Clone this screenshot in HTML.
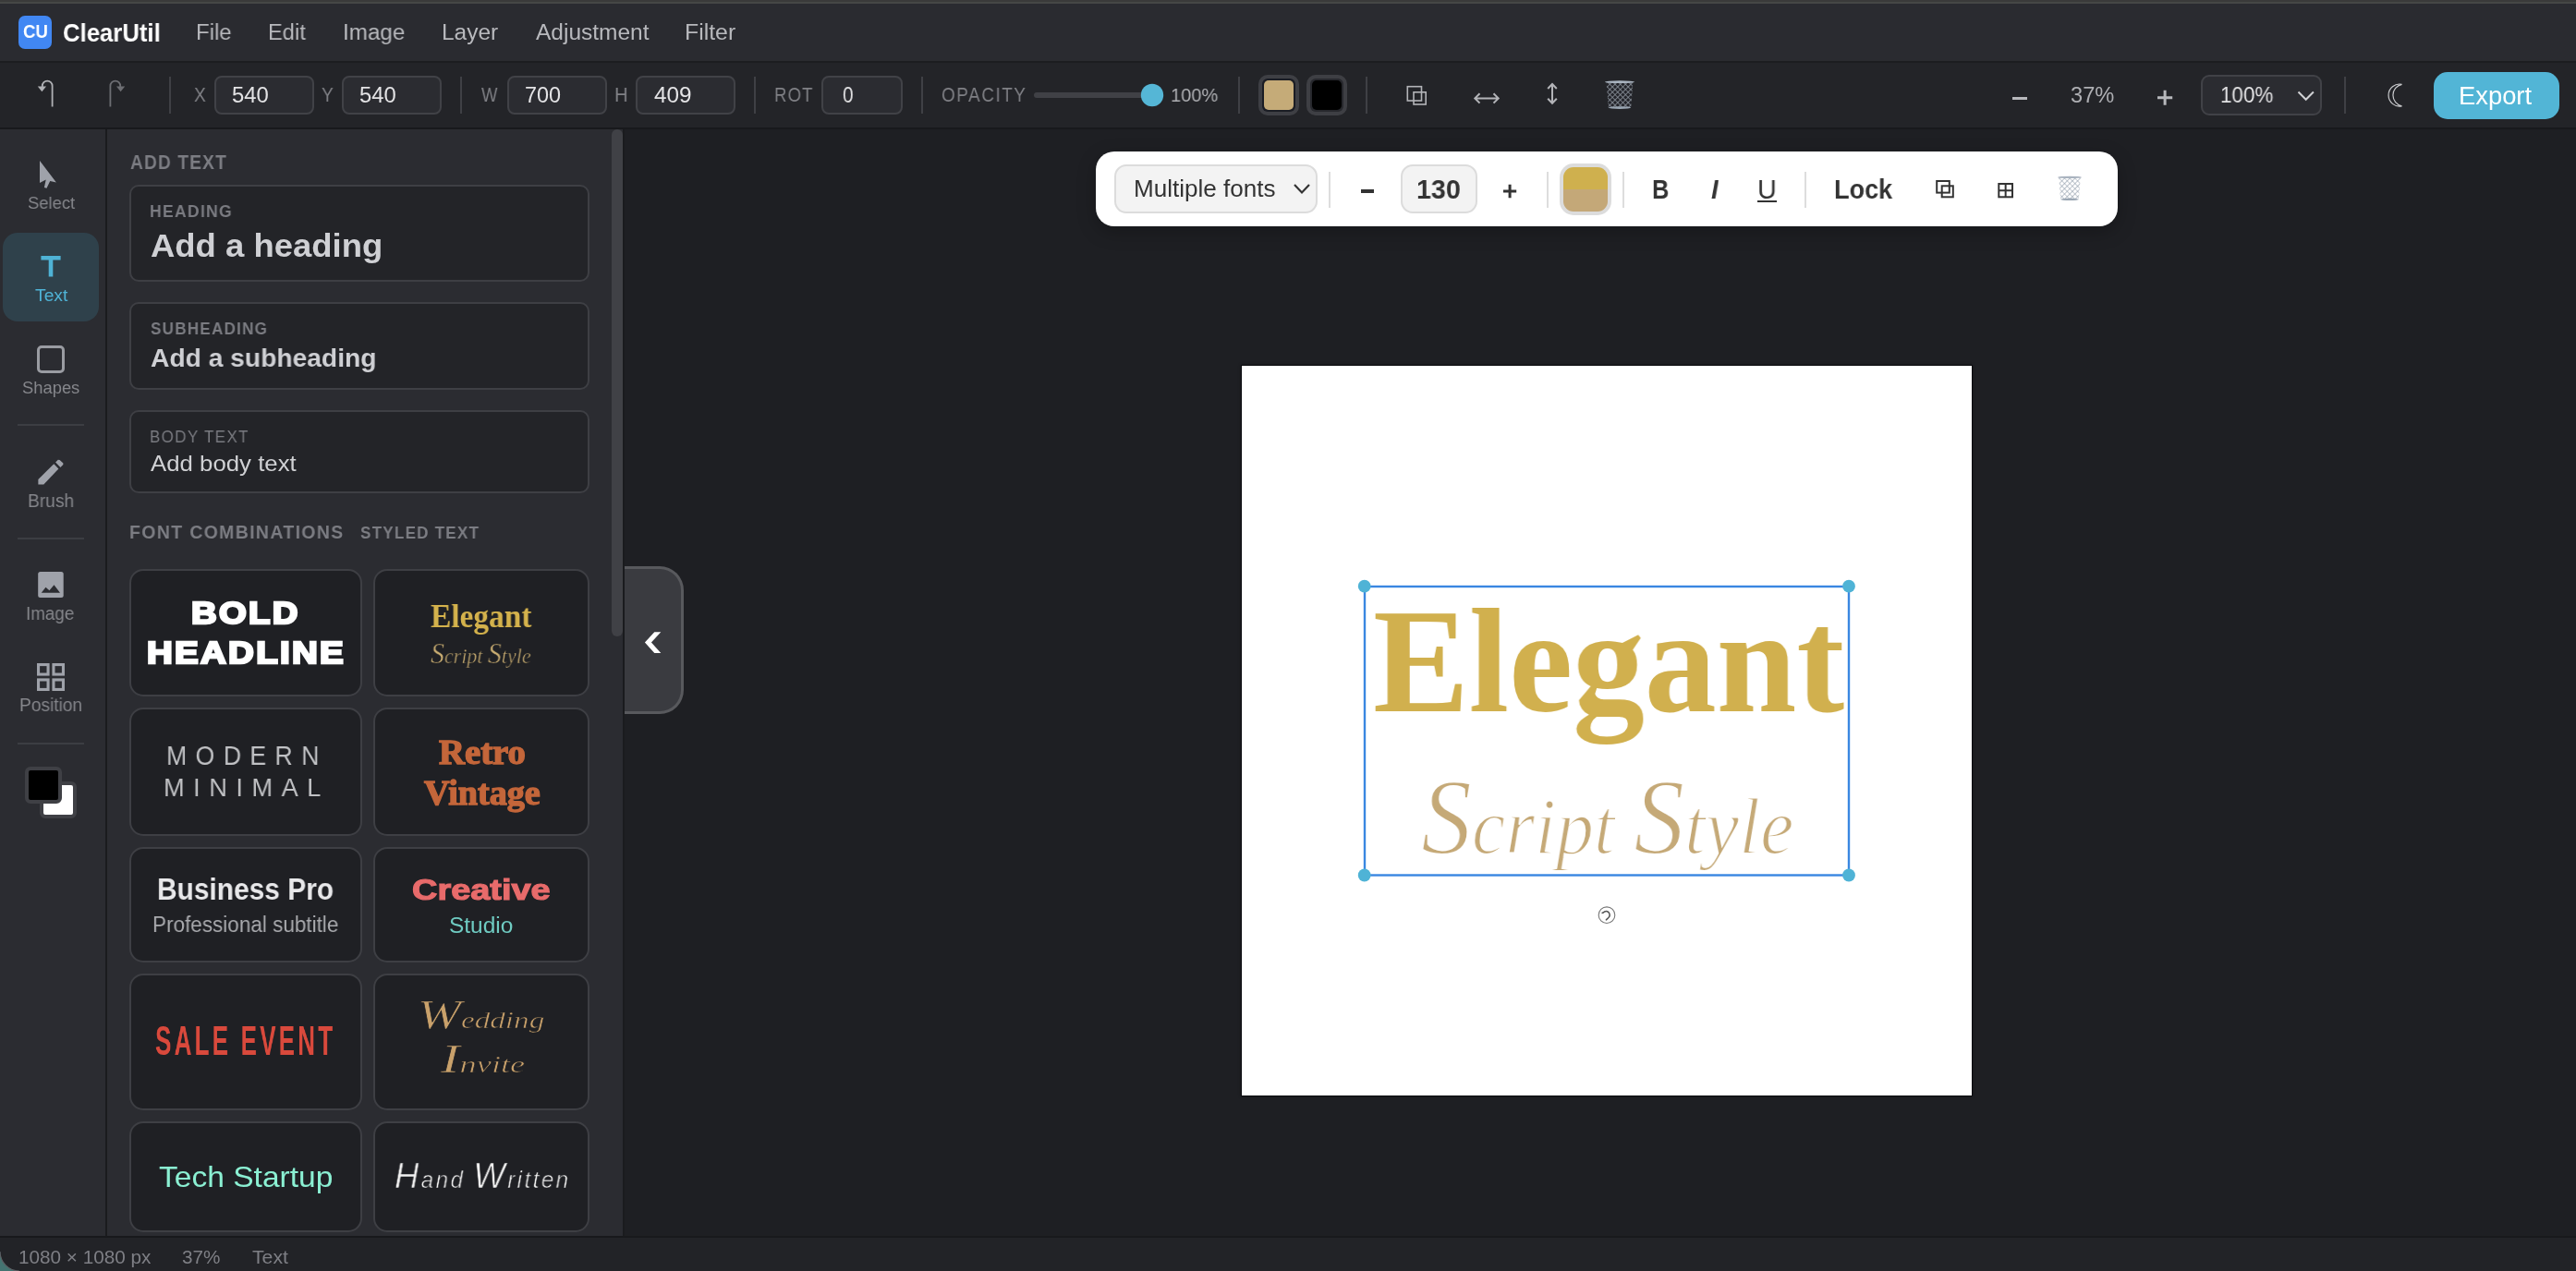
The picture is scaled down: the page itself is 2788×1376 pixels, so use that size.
<!DOCTYPE html>
<html><head><meta charset="utf-8"><title>ClearUtil</title>
<style>
html,body{margin:0;padding:0;width:2788px;height:1376px;overflow:hidden;background:#1e1f23;}
.b{position:absolute;box-sizing:border-box;}
.t{position:absolute;white-space:nowrap;transform-origin:0 0;line-height:normal;will-change:transform;}
svg.o{position:absolute;left:0;top:0;}
</style></head><body>
<div class="b" style="left:0px;top:0px;width:2788px;height:4px;background:#464746;"></div><div class="b" style="left:0px;top:0px;width:2788px;height:1.5px;background:#3a3a3a;"></div><div class="b" style="left:0px;top:4px;width:2788px;height:62px;background:#2a2b30;"></div><div class="b" style="left:0px;top:66px;width:2788px;height:2px;background:#1c1d20;"></div><div class="b" style="left:0px;top:68px;width:2788px;height:70px;background:#232428;"></div><div class="b" style="left:0px;top:138px;width:2788px;height:2px;background:#18191c;"></div><div class="b" style="left:0px;top:140px;width:114px;height:1198px;background:#2b2c31;"></div><div class="b" style="left:114px;top:140px;width:2px;height:1198px;background:#1a1b1e;"></div><div class="b" style="left:116px;top:140px;width:558px;height:1198px;background:#2b2c31;"></div><div class="b" style="left:674px;top:140px;width:2px;height:1198px;background:#1a1b1e;"></div><div class="b" style="left:0px;top:1338px;width:2788px;height:2px;background:#18191c;"></div><div class="b" style="left:0px;top:1340px;width:2788px;height:36px;background:#222327;"></div><div class="b" style="left:20px;top:17px;width:36px;height:36px;background:#4187f3;border-radius:7px;"></div><div class="b" style="left:183px;top:83px;width:2px;height:40px;background:#3f4045;"></div><div class="b" style="left:498px;top:83px;width:2px;height:40px;background:#3f4045;"></div><div class="b" style="left:816px;top:83px;width:2px;height:40px;background:#3f4045;"></div><div class="b" style="left:997px;top:83px;width:2px;height:40px;background:#3f4045;"></div><div class="b" style="left:1340px;top:83px;width:2px;height:40px;background:#3f4045;"></div><div class="b" style="left:1478px;top:83px;width:2px;height:40px;background:#3f4045;"></div><div class="b" style="left:2537px;top:83px;width:2px;height:40px;background:#3f4045;"></div><div class="b" style="left:232px;top:82px;width:108px;height:42px;background:#2b2c31;border:2px solid #414247;border-radius:8px;"></div><div class="b" style="left:370px;top:82px;width:108px;height:42px;background:#2b2c31;border:2px solid #414247;border-radius:8px;"></div><div class="b" style="left:549px;top:82px;width:108px;height:42px;background:#2b2c31;border:2px solid #414247;border-radius:8px;"></div><div class="b" style="left:688px;top:82px;width:108px;height:42px;background:#2b2c31;border:2px solid #414247;border-radius:8px;"></div><div class="b" style="left:889px;top:82px;width:88px;height:42px;background:#2b2c31;border:2px solid #414247;border-radius:8px;"></div><div class="b" style="left:1118.6px;top:100px;width:130px;height:6px;background:#404146;border-radius:3px;"></div><div class="b" style="left:1362px;top:81px;width:44px;height:44px;background:#3e3f44;border-radius:10px;"></div><div class="b" style="left:1366px;top:85px;width:36px;height:36px;background:#1b1d24;border-radius:6px;"></div><div class="b" style="left:1368px;top:87px;width:32px;height:32px;background:#c5ab78;border-radius:5px;"></div><div class="b" style="left:1414px;top:81px;width:44px;height:44px;background:#3e3f44;border-radius:10px;"></div><div class="b" style="left:1418px;top:85px;width:36px;height:36px;background:#27282d;border-radius:6px;"></div><div class="b" style="left:1420px;top:87px;width:32px;height:32px;background:#000000;border-radius:5px;"></div><div class="b" style="left:2382px;top:81px;width:131px;height:44px;background:#2b2c31;border:2px solid #414247;border-radius:9px;"></div><div class="b" style="left:2634px;top:78px;width:136px;height:51px;background:#52b5d6;border-radius:15px;"></div><div class="b" style="left:3px;top:252px;width:104px;height:96px;background:#2f414b;border-radius:16px;"></div><div class="b" style="left:19px;top:459px;width:72px;height:2px;background:#3c3e43;"></div><div class="b" style="left:19px;top:582px;width:72px;height:2px;background:#3c3e43;"></div><div class="b" style="left:19px;top:804px;width:72px;height:2px;background:#3c3e43;"></div><div class="b" style="left:43px;top:846px;width:40px;height:40px;background:#ffffff;border:4px solid #3f4045;border-radius:6px;"></div><div class="b" style="left:27px;top:830px;width:40px;height:40px;background:#000000;border:4px solid #3f4045;border-radius:6px;"></div><div class="b" style="left:140px;top:200px;width:498px;height:105px;background:#232428;border:2px solid #3e3f44;border-radius:10px;"></div><div class="b" style="left:140px;top:327px;width:498px;height:95px;background:#232428;border:2px solid #3e3f44;border-radius:10px;"></div><div class="b" style="left:140px;top:444px;width:498px;height:90px;background:#232428;border:2px solid #3e3f44;border-radius:10px;"></div><div class="b" style="left:662px;top:140px;width:12px;height:549px;background:#404146;border-radius:6px;"></div><div class="b" style="left:676px;top:613px;width:64px;height:159.5px;background:#3a3b40;border:3px solid #58595d;border-left:none;border-radius:0 26px 26px 0;"></div><div class="b" style="left:140px;top:616px;width:252px;height:138px;background:#1f2024;border:2px solid #3e3f44;border-radius:15px;"></div><div class="b" style="left:404px;top:616px;width:234px;height:138px;background:#1f2024;border:2px solid #3e3f44;border-radius:15px;"></div><div class="b" style="left:140px;top:766px;width:252px;height:139px;background:#1f2024;border:2px solid #3e3f44;border-radius:15px;"></div><div class="b" style="left:404px;top:766px;width:234px;height:139px;background:#1f2024;border:2px solid #3e3f44;border-radius:15px;"></div><div class="b" style="left:140px;top:917px;width:252px;height:125px;background:#1f2024;border:2px solid #3e3f44;border-radius:15px;"></div><div class="b" style="left:404px;top:917px;width:234px;height:125px;background:#1f2024;border:2px solid #3e3f44;border-radius:15px;"></div><div class="b" style="left:140px;top:1054px;width:252px;height:148px;background:#1f2024;border:2px solid #3e3f44;border-radius:15px;"></div><div class="b" style="left:404px;top:1054px;width:234px;height:148px;background:#1f2024;border:2px solid #3e3f44;border-radius:15px;"></div><div class="b" style="left:140px;top:1214px;width:252px;height:120px;background:#1f2024;border:2px solid #3e3f44;border-radius:15px;"></div><div class="b" style="left:404px;top:1214px;width:234px;height:120px;background:#1f2024;border:2px solid #3e3f44;border-radius:15px;"></div><div class="b" style="left:1344px;top:396px;width:790px;height:790px;background:#ffffff;box-shadow:0 0 0 1px rgba(5,5,8,0.7),0 0 3px 1px rgba(0,0,0,0.35);"></div><div class="b" style="left:1186px;top:164px;width:1106px;height:81px;background:#ffffff;border-radius:20px;box-shadow:0 6px 20px rgba(0,0,0,0.25);"></div><div class="b" style="left:1206px;top:178px;width:219.5px;height:52.5px;background:#f3f3f3;border:2px solid #dcdcdc;border-radius:13px;"></div><div class="b" style="left:1437.6px;top:185.6px;width:2px;height:39.2px;background:#dddddd;"></div><div class="b" style="left:1673.7px;top:185.6px;width:2px;height:39.2px;background:#dddddd;"></div><div class="b" style="left:1755.8px;top:185.6px;width:2px;height:39.2px;background:#dddddd;"></div><div class="b" style="left:1953px;top:185.6px;width:2px;height:39.2px;background:#dddddd;"></div><div class="b" style="left:1516px;top:178px;width:83px;height:53px;background:#f3f3f3;border:2px solid #dcdcdc;border-radius:13px;"></div><div class="b" style="left:1688px;top:177px;width:56px;height:56px;background:#dcdcdc;border-radius:15px;"></div><div class="b" style="left:1692px;top:181px;width:48px;height:24.5px;background:#cfb04e;border-radius:11px 11px 0 0;"></div><div class="b" style="left:1692px;top:205.2px;width:48px;height:24px;background:#c4a878;border-radius:0 0 11px 11px;"></div><div class="b" style="left:1902px;top:217px;width:20.5px;height:2px;background:#333333;"></div><div class="b" style="left:2178px;top:104.9px;width:15.5px;height:3.2px;background:#b7b8bc;"></div><div class="b" style="left:1472.5px;top:205.4px;width:14px;height:3.6px;background:#333333;"></div>
<svg class="o" width="2788" height="1376" viewBox="0 0 2788 1376"><defs>
<pattern id="mesh1" width="4" height="4" patternUnits="userSpaceOnUse" patternTransform="rotate(45)"><rect width="4" height="4" fill="#23242a"/><path d="M0 0 V4 M0 0 H4" stroke="#8c939c" stroke-width="1.6"/></pattern>
<pattern id="mesh0" width="4" height="4" patternUnits="userSpaceOnUse" patternTransform="rotate(45)"><rect width="4" height="4" fill="#ffffff"/><path d="M0 0 V4 M0 0 H4" stroke="#8e9aa8" stroke-width="1.2"/></pattern>
</defs><circle cx="1247" cy="103" r="12.2" fill="#55b6d6"/><path d="M708.3 684.2 L715.3 684.2 L704.9 695.6 L715.3 707 L708.3 707 L697.9 695.6 Z" fill="#ffffff"/><path d="M56.6 115.5 V93 A5.4 5.4 0 0 0 45.8 93 V94.5" fill="none" stroke="#b0b1b5" stroke-width="1.8"/><path d="M40.8 93.6 H50 L45.4 99.2 Z" fill="#b0b1b5"/><path d="M119.4 115.5 V93 A5.4 5.4 0 0 1 130.2 93 V94.5" fill="none" stroke="#6d6e73" stroke-width="1.8"/><path d="M126 93.6 H135.2 L130.6 99.2 Z" fill="#6d6e73"/><rect x="1523.3" y="93.7" width="15.2" height="15.3" fill="none" stroke="#b3b4b8" stroke-width="1.6"/><rect x="1530" y="99.8" width="13.2" height="13.2" fill="none" stroke="#b3b4b8" stroke-width="1.6"/><path d="M1597 106.4 H1621 M1601.5 101.2 L1596.3 106.4 L1601.5 111.6 M1616.5 101.2 L1621.7 106.4 L1616.5 111.6" fill="none" stroke="#b3b4b8" stroke-width="2"/><path d="M1680 91.5 V111 M1675.2 96 L1680 91 L1684.8 96 M1675.2 106.8 L1680 111.8 L1684.8 106.8" fill="none" stroke="#b3b4b8" stroke-width="2"/><path d="M1738.6 89.02 L1767.4 89.02 L1765.16 117.055 L1740.84 117.055 Z" fill="url(#mesh1)"/><ellipse cx="1753.0" cy="88.705" rx="16.0" ry="1.4175" fill="#a9b3bf"/><ellipse cx="1753.0" cy="116.5825" rx="12.16" ry="1.4175" fill="#9aa6b3"/><path d="M2335 105.8 H2351.2 M2343.1 97.8 V113.8" stroke="#b7b8bc" stroke-width="3"/><path d="M2487.5 99.5 L2495.7 107.8 L2503.9 99.5" fill="none" stroke="#d0d1d4" stroke-width="2"/><path d="M2599.5 91.3 A12 12 0 1 0 2599.5 114.8 A12 12 0 0 1 2599.5 91.3 Z" fill="none" stroke="#c9cacd" stroke-width="1.2"/><path d="M43 174 L43 198 L49.7 194.6 L47.9 202.9 L50.5 203.7 L54.2 196 L60.9 197.6 Z" fill="#9fa2aa"/><path d="M44.4 277 H65.6 V281.4 H57.3 V299.6 H52.7 V281.4 H44.4 Z" fill="#4fb3d6"/><rect x="41.5" y="375.5" width="27" height="27" rx="3.5" fill="none" stroke="#9a9ca2" stroke-width="3"/><path d="M41.4 524.6 L41.4 519 L58.3 502.2 L63.4 507.5 L47.3 524.6 Z" fill="#9fa2aa"/><path d="M60.1 500.4 L62.8 497.7 L64.6 497.9 L68.4 501.4 L68.4 503 L65.4 506.1 Z" fill="#9fa2aa"/><rect x="41.2" y="619" width="27.5" height="28" rx="2.5" fill="#9fa2aa"/><path d="M44.75 641.7 L49.5 635.8 L53.4 639.3 L58.5 633.2 L65 641.7 Z" fill="#2b2c31"/><rect x="41.55" y="719.55" width="10.5" height="10.5" fill="none" stroke="#9fa2aa" stroke-width="3.1"/><rect x="57.949999999999996" y="719.55" width="10.5" height="10.5" fill="none" stroke="#9fa2aa" stroke-width="3.1"/><rect x="41.55" y="735.9499999999999" width="10.5" height="10.5" fill="none" stroke="#9fa2aa" stroke-width="3.1"/><rect x="57.949999999999996" y="735.9499999999999" width="10.5" height="10.5" fill="none" stroke="#9fa2aa" stroke-width="3.1"/><path d="M1401 200 L1409 208.5 L1417 200" fill="none" stroke="#333" stroke-width="2.2"/><path d="M1627 207 H1641.2 M1634.1 199.8 V214.2" stroke="#333" stroke-width="3"/><rect x="2096.2" y="196" width="13.6" height="12.6" fill="none" stroke="#333" stroke-width="2"/><rect x="2101.7" y="201.3" width="12.1" height="12" fill="none" stroke="#333" stroke-width="2"/><rect x="2163.3" y="199" width="14.7" height="14.3" fill="none" stroke="#333" stroke-width="2"/><path d="M2170.65 199 V213.3 M2163.3 206.15 H2178" stroke="#333" stroke-width="2"/><path d="M2228.3 192.16 L2251.7 192.16 L2249.88 216.19 L2230.12 216.19 Z" fill="url(#mesh0)"/><ellipse cx="2240.0" cy="191.89" rx="13.0" ry="1.2149999999999999" fill="#a9b3bf"/><ellipse cx="2240.0" cy="215.785" rx="9.879999999999999" ry="1.2149999999999999" fill="#9aa6b3"/><path d="M0 1355 L0 1376 L21 1376 A21 21 0 0 1 0 1355 Z" fill="#447471"/><path d="M21 1376 A21 21 0 0 1 0 1355" fill="none" stroke="#5d6064" stroke-width="1.2"/></svg>
<div class="t" style="left:25.40px;top:22.70px;font:700 19.429px 'Liberation Sans', sans-serif;color:#ffffff;transform:scaleX(0.9587)">CU</div><div class="t" style="left:68.06px;top:20.40px;font:700 27.397px 'Liberation Sans', sans-serif;color:#ffffff;transform:scaleX(0.9394)">ClearUtil</div><div class="t" style="left:212.44px;top:21.20px;font:400 24.493px 'Liberation Sans', sans-serif;color:#b8b9bd;transform:scaleX(0.9800)">File</div><div class="t" style="left:290.47px;top:21.20px;font:400 24.493px 'Liberation Sans', sans-serif;color:#b8b9bd;transform:scaleX(0.9656)">Edit</div><div class="t" style="left:371.32px;top:21.20px;font:400 24.493px 'Liberation Sans', sans-serif;color:#b8b9bd;transform:scaleX(0.9888)">Image</div><div class="t" style="left:477.81px;top:21.20px;font:400 24.493px 'Liberation Sans', sans-serif;color:#b8b9bd;transform:scaleX(0.9933)">Layer</div><div class="t" style="left:579.50px;top:21.20px;font:400 24.493px 'Liberation Sans', sans-serif;color:#b8b9bd;transform:scaleX(1.0002)">Adjustment</div><div class="t" style="left:740.97px;top:21.20px;font:400 24.493px 'Liberation Sans', sans-serif;color:#b8b9bd;transform:scaleX(1.0143)">Filter</div><div class="t" style="left:209.80px;top:90.40px;font:400 21.594px 'Liberation Sans', sans-serif;color:#808186;transform:scaleX(0.8857)">X</div><div class="t" style="left:250.80px;top:90.30px;font:400 23.429px 'Liberation Sans', sans-serif;color:#e3e3e5;transform:scaleX(1.0196)">540</div><div class="t" style="left:348.30px;top:90.40px;font:400 21.594px 'Liberation Sans', sans-serif;color:#808186;transform:scaleX(0.8857)">Y</div><div class="t" style="left:389.30px;top:90.30px;font:400 23.429px 'Liberation Sans', sans-serif;color:#e3e3e5;transform:scaleX(1.0170)">540</div><div class="t" style="left:521.00px;top:90.40px;font:400 21.594px 'Liberation Sans', sans-serif;color:#808186;transform:scaleX(0.8571)">W</div><div class="t" style="left:567.81px;top:90.30px;font:400 23.429px 'Liberation Sans', sans-serif;color:#e3e3e5;transform:scaleX(0.9886)">700</div><div class="t" style="left:664.86px;top:90.40px;font:400 21.594px 'Liberation Sans', sans-serif;color:#808186;transform:scaleX(0.9385)">H</div><div class="t" style="left:707.50px;top:90.30px;font:400 23.429px 'Liberation Sans', sans-serif;color:#e3e3e5;transform:scaleX(1.0385)">409</div><div class="t" style="left:838.44px;top:90.40px;font:400 21.594px 'Liberation Sans', sans-serif;color:#808186;letter-spacing:1.296px;transform:scaleX(0.8603)">ROT</div><div class="t" style="left:912.30px;top:90.30px;font:400 23.429px 'Liberation Sans', sans-serif;color:#e3e3e5;transform:scaleX(0.8846)">0</div><div class="t" style="left:1019.02px;top:90.40px;font:400 21.594px 'Liberation Sans', sans-serif;color:#808186;letter-spacing:1.728px;transform:scaleX(0.8786)">OPACITY</div><div class="t" style="left:1266.75px;top:91.00px;font:400 21.143px 'Liberation Sans', sans-serif;color:#aeafb3;transform:scaleX(0.9484)">100%</div><div class="t" style="left:2240.80px;top:90.10px;font:400 23.286px 'Liberation Sans', sans-serif;color:#aeafb3;transform:scaleX(1.0157)">37%</div><div class="t" style="left:2402.93px;top:90.00px;font:400 23.143px 'Liberation Sans', sans-serif;color:#e3e3e5;transform:scaleX(0.9708)">100%</div><div class="t" style="left:2661.49px;top:88.10px;font:400 27.246px 'Liberation Sans', sans-serif;color:#ffffff;transform:scaleX(1.0046)">Export</div><div class="t" style="left:29.50px;top:209.10px;font:400 18.841px 'Liberation Sans', sans-serif;color:#85868b;transform:scaleX(0.9774)">Select</div><div class="t" style="left:37.80px;top:309.00px;font:400 18.261px 'Liberation Sans', sans-serif;color:#4fb3d6;transform:scaleX(1.0569)">Text</div><div class="t" style="left:23.60px;top:410.00px;font:400 17.826px 'Liberation Sans', sans-serif;color:#85868b;transform:scaleX(1.0313)">Shapes</div><div class="t" style="left:29.83px;top:530.60px;font:400 19.855px 'Liberation Sans', sans-serif;color:#85868b;transform:scaleX(0.9678)">Brush</div><div class="t" style="left:28.04px;top:652.60px;font:400 19.710px 'Liberation Sans', sans-serif;color:#85868b;transform:scaleX(0.9560)">Image</div><div class="t" style="left:20.71px;top:752.20px;font:400 19.420px 'Liberation Sans', sans-serif;color:#85868b;transform:scaleX(0.9859)">Position</div><div class="t" style="left:141.00px;top:163.20px;font:700 21.714px 'Liberation Sans', sans-serif;color:#7c7d83;letter-spacing:1.303px;transform:scaleX(0.8819)">ADD TEXT</div><div class="t" style="left:161.57px;top:218.20px;font:700 19.000px 'Liberation Sans', sans-serif;color:#7a7b81;letter-spacing:1.330px;transform:scaleX(0.9284)">HEADING</div><div class="t" style="left:163.20px;top:246.10px;font:700 35.890px 'Liberation Sans', sans-serif;color:#cfd0d4;transform:scaleX(1.0166)">Add a heading</div><div class="t" style="left:162.80px;top:344.90px;font:700 18.429px 'Liberation Sans', sans-serif;color:#7a7b81;letter-spacing:1.290px;transform:scaleX(0.9302)">SUBHEADING</div><div class="t" style="left:162.80px;top:371.30px;font:700 28.356px 'Liberation Sans', sans-serif;color:#cfd0d4;transform:scaleX(0.9953)">Add a subheading</div><div class="t" style="left:161.89px;top:462.00px;font:400 18.551px 'Liberation Sans', sans-serif;color:#7a7b81;letter-spacing:1.484px;transform:scaleX(0.9148)">BODY TEXT</div><div class="t" style="left:162.80px;top:487.90px;font:400 23.836px 'Liberation Sans', sans-serif;color:#d0d1d4;transform:scaleX(1.0822)">Add body text</div><div class="t" style="left:139.75px;top:563.80px;font:700 20.571px 'Liberation Sans', sans-serif;color:#7c7d83;letter-spacing:1.440px;transform:scaleX(0.9466)">FONT COMBINATIONS</div><div class="t" style="left:390.30px;top:565.80px;font:700 18.571px 'Liberation Sans', sans-serif;color:#7c7d83;letter-spacing:1.300px;transform:scaleX(0.9220)">STYLED TEXT</div><div class="t" style="left:207.10px;top:645.20px;font:700 33.286px 'Liberation Sans', sans-serif;color:#ffffff;letter-spacing:1.997px;-webkit-text-stroke:2.4px #ffffff;transform:scaleX(1.1501)">BOLD</div><div class="t" style="left:158.69px;top:687.80px;font:700 33.286px 'Liberation Sans', sans-serif;color:#ffffff;letter-spacing:1.997px;-webkit-text-stroke:2.4px #ffffff;transform:scaleX(1.1558)">HEADLINE</div><div class="t" style="left:466.40px;top:645.90px;font:700 35.538px 'Liberation Serif', serif;color:#d4b24c;transform:scaleX(0.9409)">Elegant</div><div class="t" style="left:466.15px;top:688.85px;font:italic 400 23.900px 'Liberation Serif', serif;color:#c9ad72;-webkit-text-stroke:0.5px #1f2024;transform:scaleX(0.9200)"><span style="font-size:32.504px">S</span>cript <span style="font-size:32.504px">S</span>tyle</div><div class="t" style="left:180.18px;top:802.00px;font:400 29.275px 'Liberation Sans', sans-serif;color:#c0c1c4;letter-spacing:10.246px;transform:scaleX(0.9122)">MODERN</div><div class="t" style="left:176.50px;top:835.70px;font:400 28.551px 'Liberation Sans', sans-serif;color:#c0c1c4;letter-spacing:9.993px;transform:scaleX(0.9521)">MINIMAL</div><div class="t" style="left:474.90px;top:791.70px;font:700 37.692px 'Liberation Serif', serif;color:#c4663a;-webkit-text-stroke:1.4px #c4663a;transform:scaleX(1.0272)">Retro</div><div class="t" style="left:458.80px;top:835.90px;font:700 37.846px 'Liberation Serif', serif;color:#c4663a;-webkit-text-stroke:1.4px #c4663a;transform:scaleX(1.0082)">Vintage</div><div class="t" style="left:170.19px;top:943.80px;font:700 33.000px 'Liberation Sans', sans-serif;color:#e8e8ea;transform:scaleX(0.9059)">Business Pro</div><div class="t" style="left:164.96px;top:986.50px;font:400 23.913px 'Liberation Sans', sans-serif;color:#a9aaae;transform:scaleX(0.9410)">Professional subtitle</div><div class="t" style="left:445.72px;top:944.70px;font:700 32.000px 'Liberation Sans', sans-serif;color:#e86b6b;-webkit-text-stroke:1.2px #e86b6b;transform:scaleX(1.1847)">Creative</div><div class="t" style="left:485.98px;top:987.70px;font:400 23.913px 'Liberation Sans', sans-serif;color:#6fcbc2;transform:scaleX(1.0227)">Studio</div><div class="t" style="left:168.02px;top:1101.60px;font:700 44.714px 'Liberation Sans', sans-serif;color:#d9493c;letter-spacing:5.366px;transform:scaleX(0.5841)">SALE EVENT</div><div class="t" style="left:451.85px;top:1073.10px;font:italic 400 26.000px 'Liberation Serif', serif;color:#c9a16b;-webkit-text-stroke:0.6px #1f2024;transform:scaleX(1.2759)"><span style="font-size:44.200px">W</span>edding</div><div class="t" style="left:477.40px;top:1121.20px;font:italic 400 26.000px 'Liberation Serif', serif;color:#c9a16b;-webkit-text-stroke:0.6px #1f2024;transform:scaleX(1.3987)"><span style="font-size:44.200px">I</span>nvite</div><div class="t" style="left:172.20px;top:1255.50px;font:400 31.594px 'Liberation Sans', sans-serif;color:#8bf0d3;transform:scaleX(1.0627)">Tech Startup</div><div class="t" style="left:427.36px;top:1251.30px;font:italic 400 25.800px 'Liberation Sans', sans-serif;color:#f2f2f2;letter-spacing:2.580px;-webkit-text-stroke:0.6px #1f2024;transform:scaleX(0.9384)"><span style="font-size:38.700px">H</span>and <span style="font-size:38.700px">W</span>ritten</div><div class="t" style="left:19.70px;top:1349.00px;font:400 20.714px 'Liberation Sans', sans-serif;color:#7e7f85;transform:scaleX(0.9988)">1080 × 1080 px</div><div class="t" style="left:197.00px;top:1349.00px;font:400 20.714px 'Liberation Sans', sans-serif;color:#7e7f85;transform:scaleX(0.9896)">37%</div><div class="t" style="left:272.50px;top:1349.00px;font:400 21.014px 'Liberation Sans', sans-serif;color:#7e7f85;transform:scaleX(1.0109)">Text</div><div class="t" style="left:1485.76px;top:624.40px;font:700 160.769px 'Liberation Serif', serif;color:#d1b04e;transform:scaleX(0.9680)">Elegant</div><div class="t" style="left:1538.06px;top:817.80px;font:italic 400 87.000px 'Liberation Serif', serif;color:#c5a977;-webkit-text-stroke:2px #ffffff;transform:scaleX(0.9417)"><span style="font-size:116.580px">S</span>cript <span style="font-size:116.580px">S</span>tyle</div><div class="t" style="left:1227.34px;top:189.90px;font:400 25.362px 'Liberation Sans', sans-serif;color:#333333;transform:scaleX(1.0284)">Multiple fonts</div><div class="t" style="left:1532.53px;top:188.00px;font:700 29.429px 'Liberation Sans', sans-serif;color:#333333;transform:scaleX(0.9747)">130</div><div class="t" style="left:1788.14px;top:188.00px;font:700 29.429px 'Liberation Sans', sans-serif;color:#333333;transform:scaleX(0.8632)">B</div><div class="t" style="left:1852.40px;top:188.00px;font:italic 700 29.429px 'Liberation Sans', sans-serif;color:#333333;transform:scaleX(0.9333)">I</div><div class="t" style="left:1901.77px;top:188.00px;font:400 29.855px 'Liberation Sans', sans-serif;color:#333333;transform:scaleX(0.9667)">U</div><div class="t" style="left:1985.07px;top:189.00px;font:700 29.000px 'Liberation Sans', sans-serif;color:#333333;transform:scaleX(0.9325)">Lock</div>
<svg class="o" width="2788" height="1376" viewBox="0 0 2788 1376"><rect x="1477" y="635" width="524" height="312.5" fill="none" stroke="#3a87e1" stroke-width="2.4"/><circle cx="1476.7" cy="634.7" r="6.9" fill="#4fb3d6"/><circle cx="2001" cy="634.7" r="6.9" fill="#4fb3d6"/><circle cx="1476.7" cy="947.5" r="6.9" fill="#4fb3d6"/><circle cx="2001" cy="947.5" r="6.9" fill="#4fb3d6"/><circle cx="1739" cy="990.7" r="8.8" fill="#fff" stroke="#777" stroke-width="1.1"/><path d="M1733.5 988.5 q2-0.3 3-1.5 q3-1.6 5 1.3 q1.8 3-1 5.5 q-1.5 1.2-2.5 2.6" fill="none" stroke="#555" stroke-width="1.5"/></svg>
</body></html>
